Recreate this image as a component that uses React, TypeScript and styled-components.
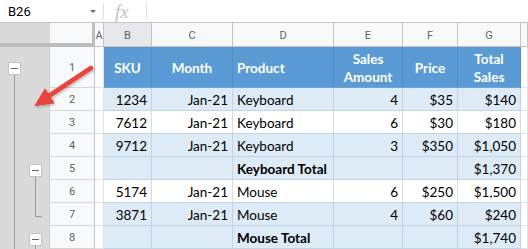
import React from "react";
import styled, { createGlobalStyle, css } from "styled-components";

const GlobalStyle = createGlobalStyle`
  html, body { margin: 0; padding: 0; background: #ffffff; overflow: hidden; }
  body { font-family: Roboto, "Liberation Sans", sans-serif; }
  * { box-sizing: border-box; }
`;

const Page = styled.div`
  position: relative;
  width: 528px;
  height: 249px;
  overflow: hidden;
  background: #ffffff;
`;

const FormulaBar = styled.div`
  display: flex;
  align-items: center;
  height: 23px;
  border-bottom: 1px solid #c7c7c7;
  background: #ffffff;
`;

const NameBox = styled.div`
  position: relative;
  display: flex;
  align-items: center;
  width: 103px;
  height: 100%;
  padding-left: 8px;
  font: 400 13px Roboto, "Liberation Sans", sans-serif;
  color: #000000;
`;

const Caret = styled.span`
  position: absolute;
  left: 90px;
  top: 10px;
  width: 0;
  height: 0;
  border-left: 3px solid transparent;
  border-right: 3px solid transparent;
  border-top: 3px solid #6b6b6b;
`;

const BarDivider = styled.span`
  width: 1px;
  height: 17px;
  background: #e0e0e0;
`;

const FxLabel = styled.div`
  width: 42px;
  padding-left: 11px;
  font: italic 400 19px "Liberation Serif", "DejaVu Serif", serif;
  color: #c4c4c4;
  line-height: 23px;
`;

const Sheet = styled.div`
  display: grid;
  grid-template-columns: 50px 45px 9px 48px 81px 101px 69px 55px 63px 1fr;
  grid-template-rows: 24px 41px repeat(7, 23px);
`;

const GutterCorner = styled.div`
  background: #dadada;
  border-bottom: 4px solid #bdbdbd;
`;

const RowCorner = styled.div`
  background: #f8f9fa;
  border-bottom: 4px solid #bdbdbd;
  border-right: 3px solid #bdbdbd;
`;

const ColHead = styled.div<{ $selected?: boolean }>`
  display: flex;
  align-items: center;
  justify-content: center;
  overflow: hidden;
  background: ${(p) => (p.$selected ? "#e6e8eb" : "#f8f9fa")};
  border-right: 1px solid #c4c4c4;
  border-bottom: 1px solid #c4c4c4;
  font: 400 11px Roboto, "Liberation Sans", sans-serif;
  color: #5f6368;
  padding-top: 1px;
`;

const Gutter = styled.div`
  grid-column: 1;
  grid-row: 2 / -1;
  position: relative;
  background: #dadada;
  border-right: 1px solid #cfcfcf;
`;

const OutlineLines = styled.svg`
  position: absolute;
  left: 0;
  top: 0;
`;

const CollapseButton = styled.button<{ $x: number; $y: number }>`
  position: absolute;
  left: ${(p) => p.$x}px;
  top: ${(p) => p.$y}px;
  width: 13px;
  height: 13px;
  padding: 0;
  margin: 0;
  background: #ffffff;
  border: 1px solid #c2c2c2;
  border-radius: 1px;
  display: flex;
  align-items: center;
  justify-content: center;
  &::after {
    content: "";
    width: 7px;
    height: 1px;
    background: #5f6368;
  }
`;

const RowNum = styled.div`
  display: flex;
  align-items: center;
  justify-content: center;
  background: #f8f9fa;
  border-right: 1px solid #c4c4c4;
  border-bottom: 1px solid #d6d6d6;
  font: 400 11px Roboto, "Liberation Sans", sans-serif;
  color: #5f6368;
`;

const BlankCell = styled.div`
  background: #ffffff;
  border-right: 1px solid #e2e2e2;
  border-bottom: 1px solid #e2e2e2;
`;

type Tone = "head" | "blue" | "white";
type Align = "left" | "right" | "center";

const tones = {
  head: css`
    background: #5b9bd5;
    color: #ffffff;
    font-weight: 700;
    border-right: 1px solid #4f8dc6;
    border-bottom: 1px solid #6aa4d8;
  `,
  blue: css`
    background: #ddebf7;
    color: #000000;
    border-right: 1px solid #c3d3e3;
    border-bottom: 1px solid #c3d3e3;
  `,
  white: css`
    background: #ffffff;
    color: #000000;
    border-right: 1px solid #d3dde8;
    border-bottom: 1px solid #c3d3e3;
  `,
};

const Cell = styled.div<{ $tone: Tone; $align: Align; $bold?: boolean }>`
  display: flex;
  align-items: center;
  justify-content: ${(p) =>
    p.$align === "left" ? "flex-start" : p.$align === "right" ? "flex-end" : "center"};
  text-align: ${(p) => p.$align};
  padding: 1px 4px 0 4px;
  font-family: Lato, "Open Sans", sans-serif;
  font-size: 13.5px;
  line-height: 18px;
  white-space: nowrap;
  overflow: hidden;
  ${(p) => tones[p.$tone]}
  ${(p) => p.$bold && css`font-weight: 700;`}
`;

const ArrowLayer = styled.svg`
  position: absolute;
  left: 0;
  top: 0;
  pointer-events: none;
`;

const columns = ["A", "B", "C", "D", "E", "F", "G", ""];
const aligns: Align[] = ["right", "right", "left", "right", "right", "right"];

const headers: { label: React.ReactNode; align: Align }[] = [
  { label: "SKU", align: "center" },
  { label: "Month", align: "center" },
  { label: "Product", align: "left" },
  { label: <>Sales<br />Amount</>, align: "center" },
  { label: "Price", align: "center" },
  { label: <>Total<br />Sales</>, align: "center" },
];

type Row = { n: number; tone: Tone; total?: boolean; cells: string[] };

const rows: Row[] = [
  { n: 2, tone: "blue", cells: ["1234", "Jan-21", "Keyboard", "4", "$35", "$140"] },
  { n: 3, tone: "white", cells: ["7612", "Jan-21", "Keyboard", "6", "$30", "$180"] },
  { n: 4, tone: "blue", cells: ["9712", "Jan-21", "Keyboard", "3", "$350", "$1,050"] },
  { n: 5, tone: "blue", total: true, cells: ["", "", "Keyboard Total", "", "", "$1,370"] },
  { n: 6, tone: "white", cells: ["5174", "Jan-21", "Mouse", "6", "$250", "$1,500"] },
  { n: 7, tone: "blue", cells: ["3871", "Jan-21", "Mouse", "4", "$60", "$240"] },
  { n: 8, tone: "blue", total: true, cells: ["", "", "Mouse Total", "", "", "$1,740"] },
];

export default function App() {
  return (
    <Page>
      <GlobalStyle />
      <FormulaBar>
        <NameBox>
          B26
          <Caret />
        </NameBox>
        <BarDivider />
        <FxLabel>fx</FxLabel>
        <BarDivider />
      </FormulaBar>
      <Sheet>
        <GutterCorner />
        <RowCorner />
        {columns.map((c) => (
          <ColHead key={c || "H"} $selected={c === "B"}>
            {c}
          </ColHead>
        ))}
        <Gutter>
          <OutlineLines width="49" height="202" viewBox="0 0 49 202">
            <g stroke="#9a9a9a" strokeWidth="1" fill="none">
              <line x1="14.5" y1="28" x2="14.5" y2="202" />
              <polyline points="35.5,130 35.5,169.5 42,169.5" />
              <line x1="35.5" y1="199" x2="35.5" y2="202" />
            </g>
          </OutlineLines>
          <CollapseButton $x={8} $y={15} aria-label="Collapse group" />
          <CollapseButton $x={29} $y={117} aria-label="Collapse group" />
          <CollapseButton $x={29} $y={186} aria-label="Collapse group" />
        </Gutter>

        <RowNum>1</RowNum>
        <BlankCell />
        {headers.map((h, i) => (
          <Cell key={i} $tone="head" $align={h.align}>
            {h.label}
          </Cell>
        ))}
        <BlankCell />

        {rows.map((r) => (
          <React.Fragment key={r.n}>
            <RowNum>{r.n}</RowNum>
            <BlankCell />
            {r.cells.map((v, i) => (
              <Cell key={i} $tone={r.tone} $align={aligns[i]} $bold={r.total && i === 2}>
                {v}
              </Cell>
            ))}
            <BlankCell />
          </React.Fragment>
        ))}
      </Sheet>

      <ArrowLayer width="528" height="249" viewBox="0 0 528 249">
        <defs>
          <filter id="arrowShadow" x="-20%" y="-20%" width="140%" height="140%">
            <feDropShadow dx="1" dy="1.5" stdDeviation="1" floodColor="#000" floodOpacity="0.25" />
          </filter>
        </defs>
        <g filter="url(#arrowShadow)" fill="#e9443e" stroke="#e9443e">
          <line x1="91" y1="68" x2="48" y2="96.5" strokeWidth="4.5" strokeLinecap="round" />
          <polygon points="35,105.5 45,89 54,103" strokeWidth="1" strokeLinejoin="round" />
        </g>
      </ArrowLayer>
    </Page>
  );
}
